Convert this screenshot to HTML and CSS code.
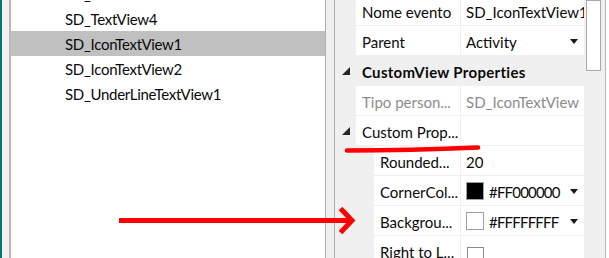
FILE: index.html
```html
<!DOCTYPE html>
<html lang="en">
<head>
    <meta charset="UTF-8">
    <title>Properties</title>
    <link rel="stylesheet" href="styles.css">
</head>
<body>
    <div class="window">
        <div class="edge"></div>
        <div class="side-gutter"></div>

        <ul class="tree">
            <li>SD_TextView3</li>
            <li>SD_TextView4</li>
            <li class="selected">SD_IconTextView1</li>
            <li>SD_IconTextView2</li>
            <li>SD_UnderLineTextView1</li>
        </ul>

        <div class="splitter"></div>

        <div class="props">
            <div class="grid">
                <div class="row">
                    <div class="indent"></div>
                    <div class="name">Nome evento</div>
                    <div class="value">SD_IconTextView1</div>
                </div>
                <div class="row">
                    <div class="indent"></div>
                    <div class="name">Parent</div>
                    <div class="value">Activity <span class="drop"></span></div>
                </div>
                <div class="row category">
                    <div class="indent"><span class="expander"></span></div>
                    <div class="title">CustomView Properties</div>
                </div>
                <div class="row disabled">
                    <div class="indent"></div>
                    <div class="name">Tipo person...</div>
                    <div class="value">SD_IconTextView</div>
                </div>
                <div class="row">
                    <div class="indent"><span class="expander"></span></div>
                    <div class="name">Custom Prop...</div>
                    <div class="value"></div>
                </div>
                <div class="row sub">
                    <div class="indent"></div>
                    <div class="name">Rounded...</div>
                    <div class="value">20</div>
                </div>
                <div class="row sub">
                    <div class="indent"></div>
                    <div class="name">CornerCol...</div>
                    <div class="value"><span class="swatch black"></span><span class="hex">#FF000000</span> <span class="drop"></span></div>
                </div>
                <div class="row sub">
                    <div class="indent"></div>
                    <div class="name">Backgrou...</div>
                    <div class="value"><span class="swatch white"></span><span class="hex">#FFFFFFFF</span> <span class="drop"></span></div>
                </div>
                <div class="row sub">
                    <div class="indent"></div>
                    <div class="name">Right to L...</div>
                    <div class="value"><span class="checkbox"></span></div>
                </div>
            </div>
        </div>

        <div class="scrollbar">
            <div class="thumb"></div>
        </div>
        <div class="rest"></div>

        <!-- red marks drawn over the screenshot -->
        <svg class="marks" width="609" height="258" viewBox="0 0 609 258">
            <path d="M347 150.5 Q410 150.5 478 147.5" fill="none" stroke="#ff0000" stroke-width="4.5" stroke-linecap="round"/>
            <line x1="119" y1="220.5" x2="349" y2="220.5" stroke="#ff0000" stroke-width="5"/>
            <polyline points="340.5,208.5 352,220.5 340.5,232.5" fill="none" stroke="#ff0000" stroke-width="5" stroke-linejoin="miter"/>
        </svg>
    </div>
</body>
</html>
```

FILE: styles.css
```css
html, body {
    margin: 0;
    padding: 0;
    background: #ffffff;
}

body {
    font-family: Lato, "Open Sans", sans-serif;
    font-size: 15px;
    color: #0a0a0a;
}

.window {
    position: relative;
    display: flex;
    width: 609px;
    height: 258px;
    overflow: hidden;
}

.edge {
    width: 2px;
    background: #00786c;
}

.side-gutter {
    width: 7px;
    background: #f2f2f2;
    border-right: 2px solid #b8b8b8;
}

.tree {
    width: 314px;
    margin: -19px 0 0 0;
    padding: 0;
    list-style: none;
    background: #ffffff;
}

.tree li {
    height: 25px;
    display: flex;
    align-items: center;
    padding: 1px 0 0 54px;
    box-sizing: border-box;
    letter-spacing: -0.3px;
    white-space: nowrap;
}

.tree li.selected {
    background: #c0c0c0;
}

.splitter {
    width: 8px;
    background: #f0f0f0;
    border-left: 1px solid #acacac;
    border-right: 1px solid #acacac;
}

.props {
    width: 249px;
    background: #f0f0f0;
    overflow: hidden;
}

.grid {
    margin-top: -4px;
}

.row {
    display: grid;
    grid-template-columns: 21px 104px 124px;
    height: 29px;
    margin-bottom: 1px;
}

.row.sub {
    grid-template-columns: 39px 86px 124px;
}

.indent {
    display: flex;
    align-items: center;
    justify-content: center;
}

.expander {
    width: 0;
    height: 0;
    margin-left: 1px;
    border-style: solid;
    border-width: 0 0 8px 8px;
    border-color: transparent transparent #262626 transparent;
}

.name,
.value {
    display: flex;
    align-items: center;
    padding-top: 2px;
    box-sizing: border-box;
    background: #ffffff;
    white-space: nowrap;
    overflow: hidden;
}

.name {
    padding-left: 6px;
}

.value {
    position: relative;
    padding-left: 5px;
    border-left: 1px solid #f0f0f0;
}

.row.disabled .name,
.row.disabled .value {
    color: #8c8c8c;
}

.row.category .title {
    grid-column: 2 / 4;
    display: flex;
    align-items: center;
    padding: 2px 0 0 6px;
    font-weight: bold;
    letter-spacing: 0.3px;
}

.hex {
    letter-spacing: -0.8px;
}

.drop {
    position: absolute;
    left: 109px;
    top: 13px;
    width: 0;
    height: 0;
    border-style: solid;
    border-width: 5px 4px 0 4px;
    border-color: #1a1a1a transparent transparent transparent;
}

.swatch {
    width: 16px;
    height: 16px;
    margin: -2px 5px 0 0;
    border: 1px solid #a0a0a0;
    flex: none;
}

.swatch.black {
    background: #000000;
}

.swatch.white {
    background: #ffffff;
}

.checkbox {
    width: 15px;
    height: 15px;
    margin: 8px 0 0 1px;
    border: 1px solid #8a8a8a;
    background: #ffffff;
}

.scrollbar {
    width: 21px;
    background: #f0f0f0;
    border-right: 1px solid #b8b8b8;
}

.thumb {
    width: 15px;
    height: 71px;
    margin-left: 2px;
    box-sizing: border-box;
    background: #ffffff;
    border: 1px solid #a8a8a8;
}

.rest {
    flex: 1;
    background: #ffffff;
}

.marks {
    position: absolute;
    left: 0;
    top: 0;
    pointer-events: none;
}
```
